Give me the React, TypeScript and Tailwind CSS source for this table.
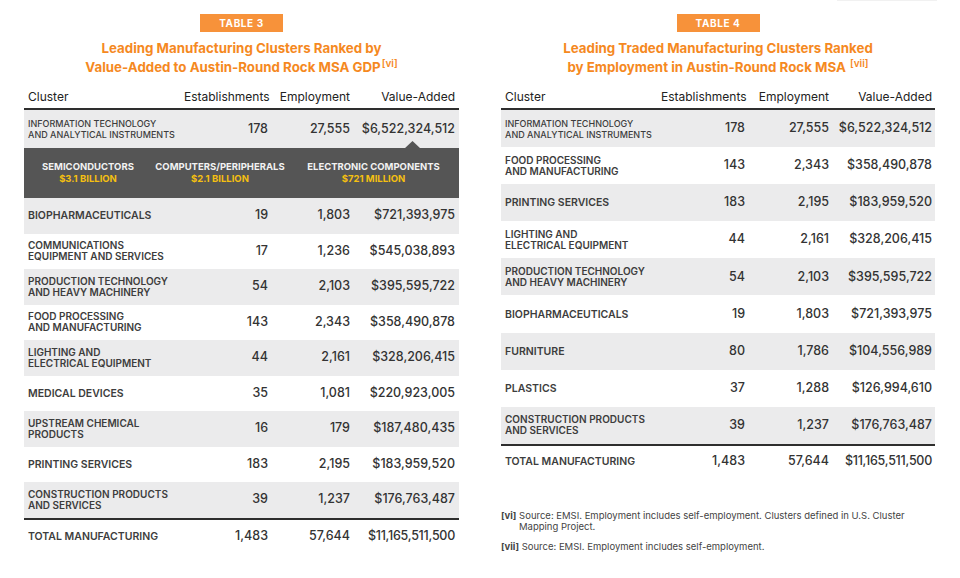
const FONT = { fontFamily: "Inter, 'Open Sans', sans-serif" };

type Row = { name: string[]; est: string; emp: string; val: string };

const LEFT_ROWS: Row[] = [
  { name: ["BIOPHARMACEUTICALS"], est: "19", emp: "1,803", val: "$721,393,975" },
  { name: ["COMMUNICATIONS", "EQUIPMENT AND SERVICES"], est: "17", emp: "1,236", val: "$545,038,893" },
  { name: ["PRODUCTION TECHNOLOGY", "AND HEAVY MACHINERY"], est: "54", emp: "2,103", val: "$395,595,722" },
  { name: ["FOOD PROCESSING", "AND MANUFACTURING"], est: "143", emp: "2,343", val: "$358,490,878" },
  { name: ["LIGHTING AND", "ELECTRICAL EQUIPMENT"], est: "44", emp: "2,161", val: "$328,206,415" },
  { name: ["MEDICAL DEVICES"], est: "35", emp: "1,081", val: "$220,923,005" },
  { name: ["UPSTREAM CHEMICAL", "PRODUCTS"], est: "16", emp: "179", val: "$187,480,435" },
  { name: ["PRINTING SERVICES"], est: "183", emp: "2,195", val: "$183,959,520" },
  { name: ["CONSTRUCTION PRODUCTS", "AND SERVICES"], est: "39", emp: "1,237", val: "$176,763,487" },
];

const RIGHT_ROWS: Row[] = [
  { name: ["INFORMATION TECHNOLOGY", "AND ANALYTICAL INSTRUMENTS"], est: "178", emp: "27,555", val: "$6,522,324,512" },
  { name: ["FOOD PROCESSING", "AND MANUFACTURING"], est: "143", emp: "2,343", val: "$358,490,878" },
  { name: ["PRINTING SERVICES"], est: "183", emp: "2,195", val: "$183,959,520" },
  { name: ["LIGHTING AND", "ELECTRICAL EQUIPMENT"], est: "44", emp: "2,161", val: "$328,206,415" },
  { name: ["PRODUCTION TECHNOLOGY", "AND HEAVY MACHINERY"], est: "54", emp: "2,103", val: "$395,595,722" },
  { name: ["BIOPHARMACEUTICALS"], est: "19", emp: "1,803", val: "$721,393,975" },
  { name: ["FURNITURE"], est: "80", emp: "1,786", val: "$104,556,989" },
  { name: ["PLASTICS"], est: "37", emp: "1,288", val: "$126,994,610" },
  { name: ["CONSTRUCTION PRODUCTS", "AND SERVICES"], est: "39", emp: "1,237", val: "$176,763,487" },
];

const LEFT_COLS = "grid-cols-[160px_84px_82px_105px] pr-[4px]";
const RIGHT_COLS = "grid-cols-[160px_84px_84px_103px] pr-[3px]";

function Title({ badge, lines, note }: { badge: string; lines: string[]; note: string }) {
  return (
    <div className="flex flex-col items-center">
      <div className="mt-[14px] flex h-[18px] w-[83px] items-center justify-center bg-[#f7923a] text-[10px] font-bold tracking-[0.06em] text-white">
        {badge}
      </div>
      <div className="mt-[7px] text-center text-[13.3px] font-bold leading-[19px] text-[#f5891f]">
        <div>{lines[0]}</div>
        <div>
          {lines[1]}
          <sup className="ml-[1px] text-[10px] font-semibold">{note}</sup>
        </div>
      </div>
    </div>
  );
}

function Header({ cols }: { cols: string }) {
  return (
    <div className={`mt-[11px] grid ${cols} items-end border-b-2 border-[#2e2e2e] pb-[2px] text-[12px] text-[#222]`}>
      <div className="pl-[4px]">Cluster</div>
      <div className="text-right">Establishments</div>
      <div className="text-right">Employment</div>
      <div className="text-right">Value-Added</div>
    </div>
  );
}

function DataRow({ row, cols, gray, h }: { row: Row; cols: string; gray: boolean; h: string }) {
  const two = row.name.length > 1;
  const small = row.name[0].startsWith("INFORMATION");
  return (
    <div className={`grid ${cols} ${h} items-center ${gray ? "bg-[#ebebec]" : "bg-white"}`}>
      <div
        className={`pl-[4px] leading-[11px] text-[#3d3d3d] ${
          small ? "text-[9px] font-medium" : two ? "text-[10px] font-semibold" : "text-[10.5px] font-semibold"
        }`}
      >
        {row.name.map((n) => (
          <div key={n}>{n}</div>
        ))}
      </div>
      <div className="text-right text-[12.5px] font-medium text-[#333]">{row.est}</div>
      <div className="text-right text-[12.5px] font-medium text-[#333]">{row.emp}</div>
      <div className="text-right text-[12.5px] font-medium text-[#333]">{row.val}</div>
    </div>
  );
}

function TotalRow({ cols, h }: { cols: string; h: string }) {
  return (
    <div className={`grid ${cols} ${h} items-center border-t-2 border-[#2e2e2e]`}>
      <div className="pl-[4px] text-[10.5px] font-semibold text-[#3d3d3d]">TOTAL MANUFACTURING</div>
      <div className="text-right text-[12.5px] font-medium text-[#333]">1,483</div>
      <div className="text-right text-[12.5px] font-medium text-[#333]">57,644</div>
      <div className="text-right text-[12.5px] font-medium tracking-[-0.02em] text-[#333]">$11,165,511,500</div>
    </div>
  );
}

function Breakdown() {
  const items = [
    ["SEMICONDUCTORS", "$3.1 BILLION"],
    ["COMPUTERS/PERIPHERALS", "$2.1 BILLION"],
    ["ELECTRONIC COMPONENTS", "$721 MILLION"],
  ];
  return (
    <div className="relative grid h-[50px] grid-cols-[128px_136px_1fr] items-center bg-[#555555]">
      <svg className="absolute right-[38px] top-[-7px]" width="17" height="8" viewBox="0 0 17 8">
        <path d="M0 8 L8.5 0 L17 8 Z" fill="#555555" />
      </svg>
      {items.map(([a, b]) => (
        <div key={a} className="text-center text-[9.5px] font-bold leading-[12px]">
          <div className="text-[#f2f2f2]">{a}</div>
          <div className="text-[#f5c010]">{b}</div>
        </div>
      ))}
    </div>
  );
}

export default function App() {
  return (
    <div className="relative h-[578px] w-[960px] overflow-hidden bg-white" style={FONT}>
      <div className="absolute right-[23px] top-0 h-[1px] w-[100px] bg-[#f1f1f1]" />
      <div className="flex pl-[24px]">
        <div className="w-[435px]">
          <Title
            badge="TABLE 3"
            lines={["Leading Manufacturing Clusters Ranked by", "Value-Added to Austin-Round Rock MSA GDP"]}
            note="[vi]"
          />
          <Header cols={LEFT_COLS} />
          <DataRow
            row={{
              name: ["INFORMATION TECHNOLOGY", "AND ANALYTICAL INSTRUMENTS"],
              est: "178",
              emp: "27,555",
              val: "$6,522,324,512",
            }}
            cols={LEFT_COLS}
            gray
            h="h-[38px]"
          />
          <Breakdown />
          {LEFT_ROWS.map((r, i) => (
            <DataRow key={r.name.join()} row={r} cols={LEFT_COLS} gray={i % 2 === 0} h="h-[35.5px]" />
          ))}
          <TotalRow cols={LEFT_COLS} h="h-[36px]" />
        </div>

        <div className="ml-[42px] w-[434px]">
          <Title
            badge="TABLE 4"
            lines={["Leading Traded Manufacturing Clusters Ranked", "by Employment in Austin-Round Rock MSA "]}
            note="[vii]"
          />
          <Header cols={RIGHT_COLS} />
          {RIGHT_ROWS.map((r, i) => (
            <DataRow key={r.name.join()} row={r} cols={RIGHT_COLS} gray={i % 2 === 0} h="h-[37.1px]" />
          ))}
          <TotalRow cols={RIGHT_COLS} h="h-[34px]" />

          <div className="mt-[32px] pr-[30px] text-[9.5px] leading-[11px] text-[#444]">
            <div className="pl-[18px] -indent-[18px]">
              <span className="font-bold">[vi]</span> Source: EMSI. Employment includes self-employment. Clusters defined in U.S. Cluster
              Mapping Project.
            </div>
            <div className="mt-[9px]">
              <span className="font-bold">[vii]</span> Source: EMSI. Employment includes self-employment.
            </div>
          </div>
        </div>
      </div>
    </div>
  );
}
